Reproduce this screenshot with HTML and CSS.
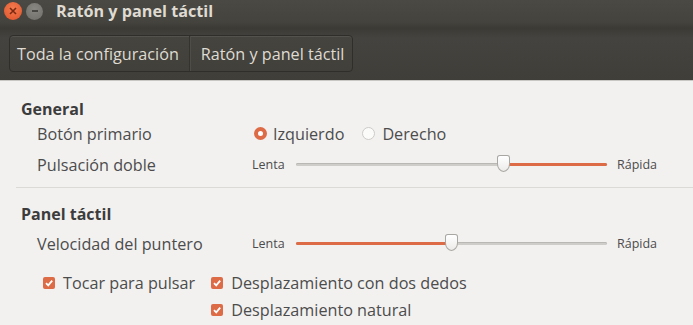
FILE: index.html
```html
<!DOCTYPE html>
<html lang="es">
<head>
    <meta charset="UTF-8">
    <title>Ratón y panel táctil</title>
    <link rel="stylesheet" href="styles.css">
</head>
<body>
    <div class="window">
        <div class="header">
            <div class="titlebar">
                <span class="wbtn close">
                    <svg width="8" height="8" viewBox="0 0 8 8"><path d="M1 1L7 7M7 1L1 7" stroke="#7a2a12" stroke-width="1.6"/></svg>
                </span>
                <span class="wbtn minimize">
                    <svg width="8" height="8" viewBox="0 0 8 8"><path d="M1 4H7" stroke="#3a3935" stroke-width="1.6"/></svg>
                </span>
                <span class="title">Ratón y panel táctil</span>
            </div>
            <div class="toolbar">
                <div class="crumbs">
                    <span class="crumb">Toda la configuración</span>
                    <span class="crumb">Ratón y panel táctil</span>
                </div>
            </div>
        </div>

        <div class="content">
            <section class="group">
                <h2>General</h2>
                <div class="row">
                    <span class="label">Botón primario</span>
                    <div class="radios">
                        <span class="radio checked">Izquierdo</span>
                        <span class="radio">Derecho</span>
                    </div>
                </div>
                <div class="row">
                    <span class="label">Pulsación doble</span>
                    <div class="scale">
                        <span class="end">Lenta</span>
                        <div class="track inverted">
                            <div class="fill" style="width: 67%"></div>
                            <div class="knob" style="left: 67%"></div>
                        </div>
                        <span class="end">Rápida</span>
                    </div>
                </div>
            </section>

            <hr class="sep">

            <section class="group">
                <h2 class="spaced">Panel táctil</h2>
                <div class="row">
                    <span class="label">Velocidad del puntero</span>
                    <div class="scale">
                        <span class="end">Lenta</span>
                        <div class="track">
                            <div class="fill" style="width: 50%"></div>
                            <div class="knob" style="left: 50%"></div>
                        </div>
                        <span class="end">Rápida</span>
                    </div>
                </div>
                <div class="checks">
                    <span class="check">Tocar para pulsar</span>
                    <div class="check-col">
                        <span class="check">Desplazamiento con dos dedos</span>
                        <span class="check">Desplazamiento natural</span>
                    </div>
                </div>
            </section>
        </div>
    </div>
</body>
</html>
```

FILE: styles.css
```css
:root {
    --orange: #dd6b45;
    --text: #4c4c4c;
    --bg: #f2f1f0;
}
html, body {
    margin: 0;
    padding: 0;
    background: var(--bg);
    font-family: 'Open Sans', 'DejaVu Sans', sans-serif;
    color: var(--text);
}
.window {
    width: 693px;
    height: 325px;
    overflow: hidden;
}
/* dark header: title bar + toolbar */
.header {
    background: linear-gradient(#4b4944 0px, #45433e 22px, #3c3a35 28px, #45433f 38px, #403e39 80px);
    border-bottom: 1px solid #c9c7c4;
    height: 80px;
}
.titlebar {
    display: flex;
    align-items: center;
    height: 22px;
    padding-left: 4px;
}
.wbtn {
    width: 18px;
    height: 18px;
    border-radius: 50%;
    display: flex;
    align-items: center;
    justify-content: center;
}
.wbtn.close {
    background: radial-gradient(circle at 50% 35%, #f37b4e, #e0522a);
}
.wbtn.minimize {
    width: 17px;
    height: 17px;
    margin-left: 4px;
    background: radial-gradient(circle at 50% 35%, #8a8883, #6f6d68);
}
.title {
    margin-left: 13px;
    font-weight: 700;
    font-size: 16.2px;
    color: #dfdbd2;
}
.toolbar {
    padding: 13px 0 0 9px;
}
.crumbs {
    display: inline-flex;
    height: 37px;
    border: 1px solid #2f2e2a;
    border-radius: 4px;
    background: linear-gradient(#46443f, #42403b);
    box-shadow: inset 0 1px 0 #54524d;
    box-sizing: border-box;
}
.crumb {
    display: flex;
    align-items: center;
    padding: 0 10px 0 7px;
    font-size: 16.2px;
    color: #dfdbd2;
}
.crumb + .crumb {
    padding: 0 8px 0 11px;
    border-left: 1px solid #34332f;
    box-shadow: inset 1px 0 0 #4f4d48;
}
.content {
    padding-top: 20px;
}
.group {
    padding-left: 21px;
}
h2 {
    margin: 0;
    font-size: 16px;
    font-weight: 700;
    color: #3c3c3c;
    line-height: 17px;
}
h2.spaced {
    margin-bottom: 5px;
}
.row {
    display: flex;
    align-items: center;
    height: 31px;
}
.label {
    width: 215px;
    padding-left: 16px;
    font-size: 16.2px;
}
.radios {
    display: flex;
    gap: 18px;
    padding-left: 2px;
    font-size: 16.2px;
}
.radio {
    display: flex;
    align-items: center;
}
.radio::before {
    content: "";
    width: 11px;
    height: 11px;
    border-radius: 50%;
    border: 1px solid #cdcbc8;
    background: #fbfbfa;
    margin-right: 7px;
    box-sizing: content-box;
}
.radio.checked::before {
    width: 5px;
    height: 5px;
    border: 4px solid var(--orange);
    background: #fff;
    margin-right: 6px;
}
.scale {
    display: flex;
    align-items: center;
    font-size: 12.5px;
}
.end {
    width: 44px;
}
.scale .end:last-child {
    padding-left: 10px;
}
.track {
    position: relative;
    width: 311px;
    height: 3px;
    background: #cfcdca;
    border-radius: 2px;
    box-shadow: inset 0 1px 0 #bab8b5;
}
.fill {
    height: 100%;
    background: var(--orange);
    border-radius: 2px;
}
.track.inverted {
    display: flex;
    flex-direction: row-reverse;
}
.track.inverted .fill {
    width: 33% !important;
}
.knob {
    position: absolute;
    top: -8px;
    width: 13px;
    height: 17px;
    margin-left: -7px;
    background: linear-gradient(#fff, #ecebea);
    border: 1px solid #a9a7a3;
    border-radius: 3px 3px 7px 7px / 3px 3px 9px 9px;
    box-sizing: border-box;
}
.sep {
    margin: 7px 0 18px 16px;
    border: 0;
    border-top: 1px solid #dcdad7;
    height: 0;
}
.checks {
    display: flex;
    align-items: flex-start;
    padding-left: 22px;
    margin-top: 10px;
    font-size: 16.2px;
}
.check-col {
    display: flex;
    flex-direction: column;
    margin-left: 16px;
}
.check {
    display: flex;
    align-items: center;
    height: 27px;
}
.check::before {
    content: "";
    width: 12px;
    height: 12px;
    border-radius: 2px;
    margin-right: 8px;
    background: var(--orange) url("data:image/svg+xml;utf8,<svg xmlns='http://www.w3.org/2000/svg' width='12' height='12'><path d='M3 6.2L5.2 8.4L9.2 3.6' fill='none' stroke='white' stroke-width='1.8'/></svg>") center no-repeat;
}
```
